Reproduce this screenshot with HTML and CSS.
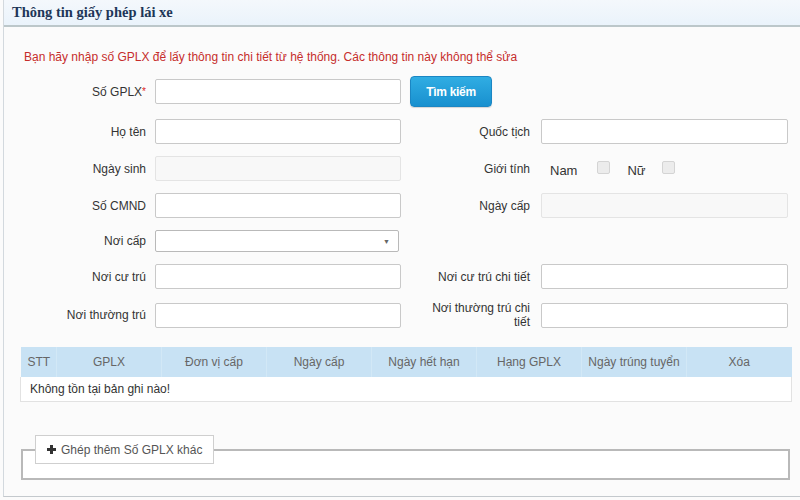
FILE: index.html
```html
<!DOCTYPE html>
<html lang="vi">
<head>
<meta charset="utf-8">
<title>Thông tin giấy phép lái xe</title>
<link rel="stylesheet" href="styles.css">
</head>
<body>
<div class="panel">
  <div class="panel-head">Thông tin giấy phép lái xe</div>
  <div class="panel-body">
    <p class="notice">Bạn hãy nhập số GPLX để lấy thông tin chi tiết từ hệ thống. Các thông tin này không thể sửa</p>
    <div class="form-grid">
      <label class="lbl">Số GPLX<span class="req">*</span></label>
      <div class="input"></div>
      <div class="btn-cell"><button class="btn-search">Tìm kiếm</button></div>
      <div></div>

      <label class="lbl">Họ tên</label>
      <div class="input"></div>
      <label class="lbl lbl-r">Quốc tịch</label>
      <div class="input"></div>

      <label class="lbl">Ngày sinh</label>
      <div class="input disabled"></div>
      <label class="lbl lbl-r">Giới tính</label>
      <div class="gender">
        <span class="g-nam">Nam</span><span class="chk"></span>
        <span class="g-nu">Nữ</span><span class="chk"></span>
      </div>

      <label class="lbl">Số CMND</label>
      <div class="input"></div>
      <label class="lbl lbl-r">Ngày cấp</label>
      <div class="input disabled"></div>

      <label class="lbl">Nơi cấp</label>
      <div class="select"><span class="arrow">▼</span></div>
      <div></div>
      <div></div>

      <label class="lbl">Nơi cư trú</label>
      <div class="input"></div>
      <label class="lbl lbl-r">Nơi cư trú chi tiết</label>
      <div class="input"></div>

      <label class="lbl">Nơi thường trú</label>
      <div class="input"></div>
      <label class="lbl lbl-r">Nơi thường trú chi tiết</label>
      <div class="input"></div>
    </div>

    <table class="grid-table">
      <colgroup>
        <col class="col-stt">
        <col class="col-std"><col class="col-std"><col class="col-std"><col class="col-std">
        <col class="col-std"><col class="col-std"><col class="col-std">
      </colgroup>
      <thead>
        <tr>
          <th class="c-stt">STT</th>
          <th>GPLX</th>
          <th>Đơn vị cấp</th>
          <th>Ngày cấp</th>
          <th>Ngày hết hạn</th>
          <th>Hạng GPLX</th>
          <th>Ngày trúng tuyển</th>
          <th>Xóa</th>
        </tr>
      </thead>
      <tbody>
        <tr><td colspan="8" class="empty">Không tồn tại bản ghi nào!</td></tr>
      </tbody>
    </table>

    <fieldset class="more">
      <legend class="more-legend"><svg class="plus" width="9" height="9" viewBox="0 0 9 9"><path d="M3 0h3v3h3v3H6v3H3V6H0V3h3z" fill="#333"/></svg>Ghép thêm Số GPLX khác</legend>
      <div class="more-body"></div>
    </fieldset>
  </div>
</div>
</body>
</html>
```

FILE: styles.css
```css
html, body {
  margin: 0;
  padding: 0;
  background: #fbfbfb;
}

body {
  font-family: "Liberation Sans", Arial, sans-serif;
  font-size: 12px;
  color: #333;
}

.panel {
  margin-left: 3px;
  height: 497px;
  box-sizing: border-box;
  border-left: 1px solid #d3d9de;
  border-bottom: 1px solid #c4c9cd;
  background: #fbfbfb;
}

.panel-head {
  height: 25px;
  line-height: 25px;
  padding-left: 8px;
  background: linear-gradient(#f4f8fc, #eaf3fb);
  border-bottom: 2px solid #bcc7ca;
  font-family: "Liberation Serif", "Times New Roman", serif;
  font-weight: bold;
  font-size: 14.5px;
  color: #1d3658;
}

.panel-body {
  padding: 23px 8px 0 16px;
}

.notice {
  margin: 0 0 0 4px;
  line-height: 15px;
  color: #c62d2b;
  font-size: 12px;
}

.form-grid {
  margin-top: 11px;
  display: grid;
  grid-template-columns: 135px 246px 140px 247px;
  row-gap: 12px;
  align-items: center;
}

.lbl {
  text-align: right;
  padding-right: 9px;
  line-height: 14px;
  color: #333;
}

.lbl-r {
  padding-left: 19px;
  padding-right: 11px;
}

.req {
  color: #d22;
  font-size: 10px;
  vertical-align: top;
}

.input {
  height: 25px;
  box-sizing: border-box;
  border: 1px solid #c9c9c9;
  border-radius: 2px;
  background: #fff;
}

.input.disabled {
  background: #f8f8f8;
  border-color: #e4e4e4;
}

.select {
  width: 244px;
  height: 22px;
  box-sizing: border-box;
  border: 1px solid #b9b9b9;
  border-radius: 2px;
  background: #fff;
  display: flex;
  align-items: center;
  justify-content: flex-end;
  padding-right: 8px;
}

.arrow {
  font-size: 7px;
  color: #666;
}

.btn-cell {
  padding-left: 9px;
}

.btn-search {
  width: 82px;
  height: 31px;
  border: 1px solid #1b86c3;
  border-radius: 4px;
  background: linear-gradient(#30ade3, #1890cf);
  color: #fff;
  font-family: "Liberation Sans", Arial, sans-serif;
  font-weight: bold;
  font-size: 12px;
  letter-spacing: -0.3px;
  padding: 0;
  box-shadow: 0 1px 1px rgba(0,0,0,0.15);
}

.gender {
  display: flex;
  align-items: center;
  padding-left: 9px;
  height: 25px;
  font-size: 13px;
  color: #333;
}

.g-nam {
  margin-right: 20px;
  margin-top: 3px;
}

.g-nu {
  margin-left: 17px;
  margin-right: 16px;
  margin-top: 3px;
}

.chk {
  width: 11px;
  height: 11px;
  border: 1px solid #d4d4d4;
  background: #ececec;
  border-radius: 2px;
  margin-top: -3px;
}

.grid-table {
  margin-top: 18px;
  width: 771px;
  border-collapse: collapse;
  table-layout: fixed;
}

.col-stt {
  width: 36px;
}

.col-std {
  width: 105px;
}

.grid-table th {
  height: 30px;
  background: #c8e2f4;
  font-weight: normal;
  color: #666;
  font-size: 12px;
  text-align: center;
  padding: 0;
  border-right: 1px solid #d2e8f6;
}

.grid-table th:last-child {
  border-right: none;
}

.grid-table th.c-stt {
  text-align: left;
  padding-left: 7px;
}

.grid-table td.empty {
  height: 24px;
  padding: 0 0 0 9px;
  background: #fff;
  border: 1px solid #e2e2e2;
  border-top: none;
  color: #333;
}

.more {
  margin: 33px 0 0 1px;
  width: 769px;
  box-sizing: border-box;
  padding: 0 0 14px 12px;
  border: 2px solid #b9b9b9;
  background: #fff;
}

.more-legend {
  padding: 0 11px;
  height: 29px;
  box-sizing: border-box;
  border: 1px solid #cfcfcf;
  background: #fff;
  color: #555;
  display: flex;
  align-items: center;
  font-size: 12px;
}

.plus {
  margin-right: 5px;
}

.more-body {
  height: 0;
}
```
